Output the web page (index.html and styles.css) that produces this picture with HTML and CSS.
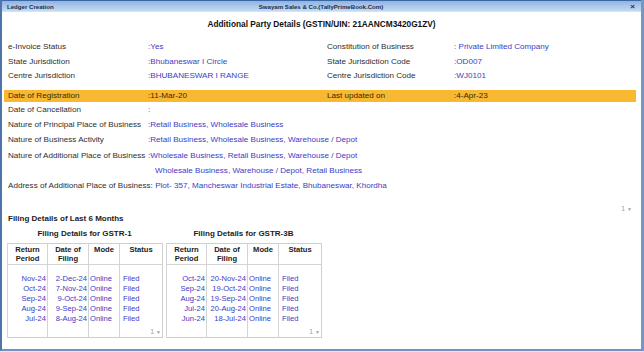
FILE: index.html
```html
<!DOCTYPE html>
<html lang="en">
<head>
    <meta charset="UTF-8">
    <meta name="viewport" content="width=device-width, initial-scale=1.0">
    <title>Ledger Creation</title>
    <link rel="stylesheet" href="styles.css">
</head>
<body>
    <div class="window">
        <div class="titlebar">
            <span class="tb-left">Ledger Creation</span>
            <span class="tb-center">Swayam Sales &amp; Co.(TallyPrimeBook.Com)</span>
            <span class="tb-close">&times;</span>
        </div>

        <div class="content">
            <h1 class="heading">Additional Party Details (GSTIN/UIN: 21AANCM3420G1ZV)</h1>

            <div class="details">
                <div class="label top">e-Invoice Status</div>
                <div class="value top">:Yes</div>
                <div class="label top">Constitution of Business</div>
                <div class="value top">: Private Limited Company</div>

                <div class="label top">State Jurisdiction</div>
                <div class="value top">:Bhubaneswar I Circle</div>
                <div class="label top">State Jurisdiction Code</div>
                <div class="value top">:OD007</div>

                <div class="label top">Centre Jurisdiction</div>
                <div class="value top">:BHUBANESWAR I RANGE</div>
                <div class="label top">Centre Jurisdiction Code</div>
                <div class="value top">:WJ0101</div>

                <div class="band">
                    <div class="label">Date of Registration</div>
                    <div class="value">:11-Mar-20</div>
                    <div class="label">Last updated on</div>
                    <div class="value">:4-Apr-23</div>
                </div>

                <div class="label">Date of Cancellation</div>
                <div class="value wide">:</div>

                <div class="label">Nature of Principal Place of Business</div>
                <div class="value wide">:Retail Business, Wholesale Business</div>

                <div class="label">Nature of Business Activity</div>
                <div class="value wide">:Retail Business, Wholesale Business, Warehouse / Depot</div>

                <div class="label">Nature of Additional Place of Business</div>
                <div class="value wide">:Wholesale Business, Retail Business, Warehouse / Depot</div>

                <div class="label"></div>
                <div class="value wide indent">Wholesale Business, Warehouse / Depot, Retail Business</div>

                <div class="full-row">
                    <span class="label">Address of Additional Place of Business:</span>
                    <span class="value">Plot- 357, Mancheswar Industrial Estate, Bhubaneswar, Khordha</span>
                </div>
            </div>

            <div class="page-ind">1 <span class="arrow">&#9660;</span></div>

            <div class="filing">
                <div class="filing-title">Filing Details of Last 6 Months</div>
                <div class="tables">
                    <div class="block">
                        <div class="block-title">Filing Details for GSTR-1</div>
                        <table class="returns">
                            <thead>
                                <tr><th>Return<br>Period</th><th>Date of<br>Filing</th><th>Mode</th><th>Status</th></tr>
                            </thead>
                            <tbody>
                                <tr class="first"><td>Nov-24</td><td>2-Dec-24</td><td class="mode">Online</td><td class="status">Filed</td></tr>
                                <tr><td>Oct-24</td><td>7-Nov-24</td><td class="mode">Online</td><td class="status">Filed</td></tr>
                                <tr><td>Sep-24</td><td>9-Oct-24</td><td class="mode">Online</td><td class="status">Filed</td></tr>
                                <tr><td>Aug-24</td><td>9-Sep-24</td><td class="mode">Online</td><td class="status">Filed</td></tr>
                                <tr><td>Jul-24</td><td>8-Aug-24</td><td class="mode">Online</td><td class="status">Filed</td></tr>
                                <tr class="foot"><td></td><td></td><td></td><td class="pager">1 <span class="arrow">&#9660;</span></td></tr>
                            </tbody>
                        </table>
                    </div>
                    <div class="block">
                        <div class="block-title">Filing Details for GSTR-3B</div>
                        <table class="returns">
                            <thead>
                                <tr><th>Return<br>Period</th><th>Date of<br>Filing</th><th>Mode</th><th>Status</th></tr>
                            </thead>
                            <tbody>
                                <tr class="first"><td>Oct-24</td><td>20-Nov-24</td><td class="mode">Online</td><td class="status">Filed</td></tr>
                                <tr><td>Sep-24</td><td>19-Oct-24</td><td class="mode">Online</td><td class="status">Filed</td></tr>
                                <tr><td>Aug-24</td><td>19-Sep-24</td><td class="mode">Online</td><td class="status">Filed</td></tr>
                                <tr><td>Jul-24</td><td>20-Aug-24</td><td class="mode">Online</td><td class="status">Filed</td></tr>
                                <tr><td>Jun-24</td><td>18-Jul-24</td><td class="mode">Online</td><td class="status">Filed</td></tr>
                                <tr class="foot"><td></td><td></td><td></td><td class="pager">1 <span class="arrow">&#9660;</span></td></tr>
                            </tbody>
                        </table>
                    </div>
                </div>
            </div>
        </div>
    </div>
</body>
</html>
```

FILE: styles.css
```css
body {
    margin: 0;
    background-color: #dfe9f5;
    font-family: "Liberation Sans", Arial, sans-serif;
    color: #2e2e2e;
}
.window {
    width: 644px;
    height: 351px;
    box-sizing: border-box;
    background-color: #ffffff;
    border-left: 2px solid #4f74aa;
    border-right: 3px solid #7397c6;
    border-bottom: 2px solid #6f93c4;
    display: flex;
    flex-direction: column;
}
.titlebar {
    height: 10px;
    display: flex;
    align-items: center;
    padding: 0 6px 0 5px;
    border-top: 1px solid #3d66a8;
    border-bottom: 1px solid #d6e5f6;
    background: linear-gradient(#8fb5e2, #c4daf2);
    font-size: 6.1px;
    font-weight: bold;
    color: #1c2c4c;
}
.tb-left {
    flex: 1;
}
.tb-center {
    flex: 1;
    text-align: center;
    white-space: nowrap;
}
.tb-close {
    flex: 1;
    text-align: right;
    font-size: 8px;
}
.content {
    flex: 1;
    display: flex;
    flex-direction: column;
}
.heading {
    margin: 6px 0 10px;
    text-align: center;
    font-size: 8.3px;
    line-height: 12px;
    font-weight: bold;
    color: #111111;
}
.details {
    display: grid;
    grid-template-columns: 140px 179px 127px 1fr;
    padding-left: 6px;
    font-size: 8.1px;
    line-height: 15.3px;
}
.details .top {
    line-height: 14.6px;
}
.label {
    white-space: nowrap;
}
.value {
    color: #3d3cc4;
    white-space: nowrap;
}
.value.wide {
    grid-column: 2 / 5;
}
.value.indent {
    padding-left: 7px;
}
.full-row {
    grid-column: 1 / 5;
    white-space: nowrap;
}
.band {
    grid-column: 1 / 5;
    display: grid;
    grid-template-columns: 140px 179px 127px 1fr;
    margin: 6px 5px 0 -4px;
    padding-left: 4px;
    line-height: 12px;
    background-color: #f8b832;
}
.band .label,
.band .value {
    color: #3a2a08;
}
.page-ind {
    align-self: flex-end;
    margin: 11px 9px 0 0;
    font-size: 7px;
    line-height: 8px;
    color: #a0a0a0;
}
.arrow {
    font-size: 5px;
}
.filing {
    padding-left: 5px;
}
.filing-title {
    padding-left: 1px;
    font-size: 8px;
    font-weight: bold;
    line-height: 12px;
    color: #1c1c1c;
}
.tables {
    display: flex;
    gap: 4px;
}
.block {
    width: 155px;
}
.block-title {
    text-align: center;
    font-size: 8px;
    font-weight: bold;
    line-height: 14px;
    margin: 2px 0 2px;
    color: #1c1c1c;
}
.returns {
    width: 155px;
    border-collapse: collapse;
    border: 1px solid #cfcfcf;
    font-size: 7.6px;
    table-layout: fixed;
}
.returns th,
.returns td {
    box-sizing: border-box;
    padding: 0 1px;
    border-left: 1px solid #d4d4d4;
    white-space: nowrap;
}
.returns th {
    height: 20px;
    line-height: 9.5px;
    vertical-align: top;
    padding-top: 1px;
    font-weight: bold;
    color: #222222;
    border-bottom: 1px solid #d4d4d4;
}
.returns th:nth-child(1) { width: 40px; }
.returns th:nth-child(2) { width: 41px; }
.returns th:nth-child(3) { width: 31px; }
.returns th:nth-child(4) { width: 43px; }
.returns td {
    line-height: 10px;
    text-align: right;
    color: #3d3cc4;
}
.returns td.mode,
.returns td.status {
    text-align: left;
}
.returns td.status {
    padding-left: 3px;
}
.returns tr.first td {
    padding-top: 9px;
}
.returns tr.foot td {
    height: 14px;
    vertical-align: bottom;
}
.returns td.pager {
    text-align: right;
    color: #a0a0a0;
    font-size: 7px;
}
```
